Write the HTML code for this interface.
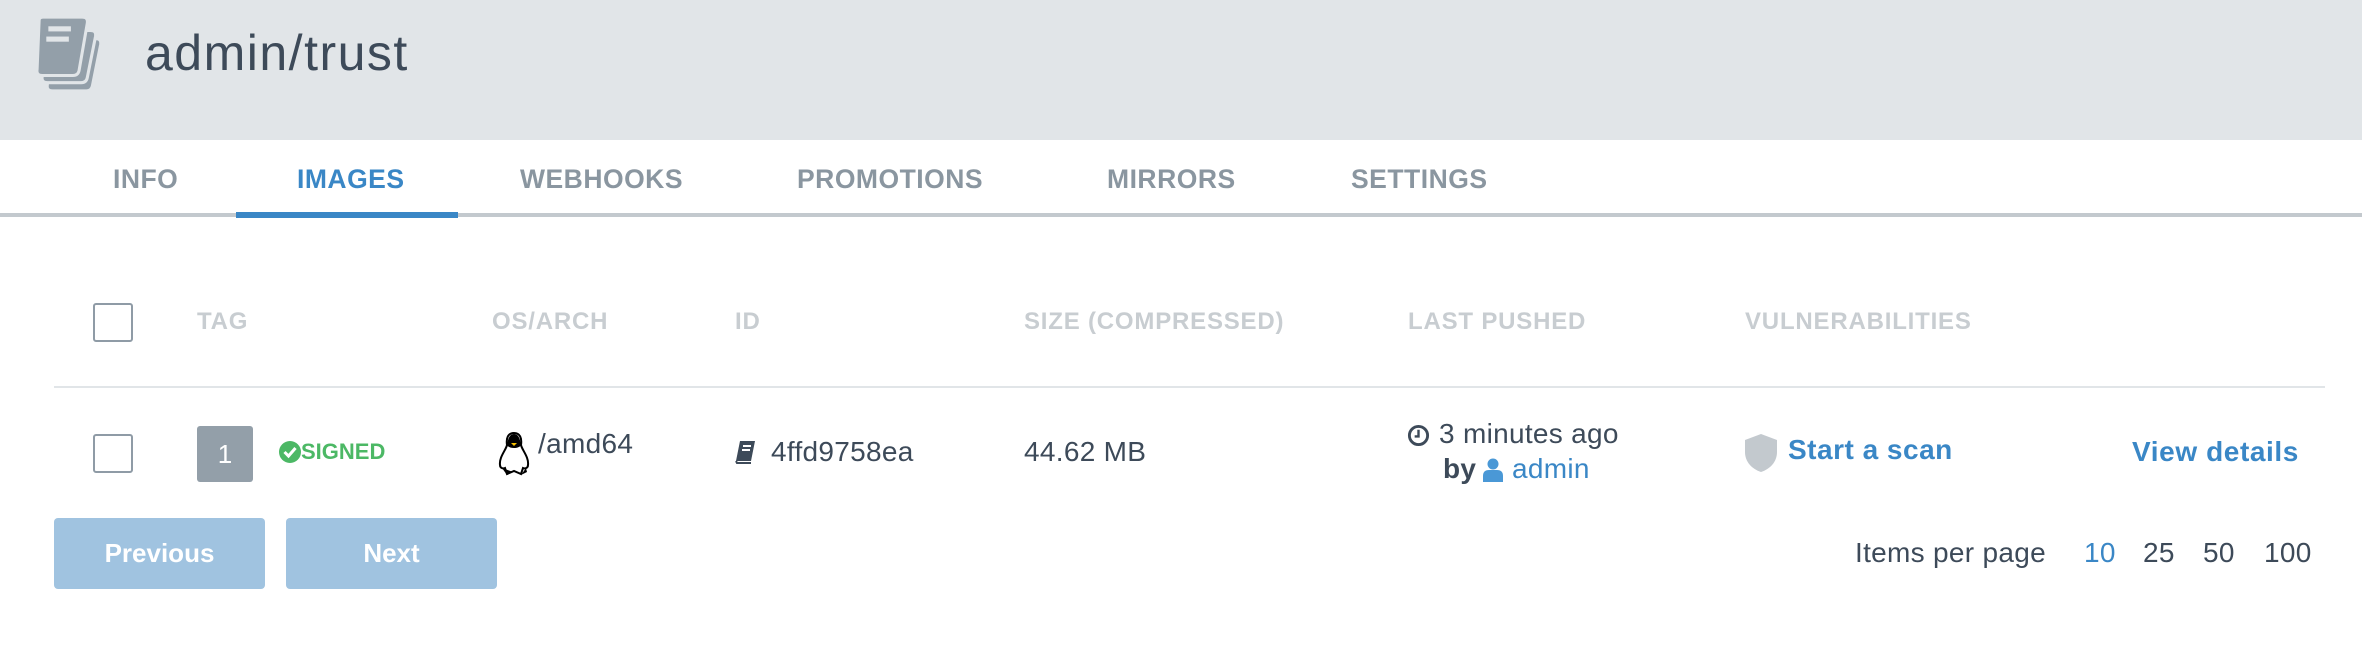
<!DOCTYPE html>
<html><head><meta charset="utf-8"><style>
*{margin:0;padding:0;box-sizing:border-box}
body{width:2362px;height:664px;background:#fff;font-family:"Liberation Sans",sans-serif;position:relative;overflow:hidden;color:#3d4a59}
.a{position:absolute;white-space:nowrap}
.hdr{position:absolute;left:0;top:0;width:2362px;height:140px;background:#e1e5e8}
.tabline{position:absolute;left:0;top:213px;width:2362px;height:4px;background:#c3c9ce}
.tab{position:absolute;top:164px;font-size:26.5px;font-weight:bold;color:#8a96a0;letter-spacing:0.5px}
.th{position:absolute;top:308px;font-size:24px;font-weight:bold;color:#c8cdd1;letter-spacing:0.8px}
.cb{position:absolute;width:40px;height:39px;border:2px solid #8f9ba6;border-radius:3px;background:#fff}
.td{position:absolute;font-size:28px;color:#3d4a59;white-space:nowrap;letter-spacing:0.3px}
.blue{color:#3a87c6}
.btn{position:absolute;top:518px;width:211px;height:71px;background:#a0c3e0;border-radius:4px;color:#fff;font-weight:bold;font-size:26px;text-align:center;line-height:71px}
</style></head><body>
<div class="hdr"></div>
<svg class="a" style="left:34px;top:16px" width="82" height="78" viewBox="0 0 80 76">
<g fill="#939fa9" stroke="#e1e5e8" stroke-width="3">
<path d="M14 22 h46 q6 0 5 6 l-8 40 q-1 5 -6 5 h-33 q-6 0 -5 -6 z"/>
<path d="M9 14 h46 q6 0 5 6 l-8 40 q-1 5 -6 5 h-33 q-6 0 -5 -6 z"/>
<path d="M5 4 q0 -3 4 -3 h38 q6 0 5 6 l-8 46 q-1 5 -6 5 h-30 q-6 0 -5 -6 z"/>
</g>
<rect x="14" y="10" width="22" height="5" fill="#e1e5e8"/><rect x="12" y="20" width="22" height="5" fill="#e1e5e8"/>
</svg>
<div class="a" style="left:145px;top:24px;font-size:50px;letter-spacing:1.5px;color:#3d4a59">admin/trust</div>
<div class="tabline"></div>
<div class="a" style="left:236px;top:212px;width:222px;height:6px;background:#3a87c6"></div>
<div class="tab" style="left:113px">INFO</div>
<div class="tab" style="left:297px;color:#3a87c6">IMAGES</div>
<div class="tab" style="left:520px">WEBHOOKS</div>
<div class="tab" style="left:797px">PROMOTIONS</div>
<div class="tab" style="left:1107px">MIRRORS</div>
<div class="tab" style="left:1351px">SETTINGS</div>

<div class="cb" style="left:93px;top:303px"></div>
<div class="th" style="left:197px">TAG</div>
<div class="th" style="left:492px">OS/ARCH</div>
<div class="th" style="left:735px">ID</div>
<div class="th" style="left:1024px">SIZE (COMPRESSED)</div>
<div class="th" style="left:1408px">LAST PUSHED</div>
<div class="th" style="left:1745px">VULNERABILITIES</div>
<div class="a" style="left:54px;top:386px;width:2271px;height:2px;background:#e1e5e8"></div>

<div class="cb" style="left:93px;top:434px"></div>
<div class="a" style="left:197px;top:426px;width:56px;height:56px;background:#939fa9;border-radius:3px;color:#fff;font-size:26px;text-align:center;line-height:56px">1</div>
<svg class="a" style="left:279px;top:441px" width="22" height="22" viewBox="0 0 22 22"><circle cx="11" cy="11" r="11" fill="#4cb865"/><path d="M5.5 11 l4 4 l7 -8" stroke="#fff" stroke-width="3" fill="none"/></svg>
<div class="a" style="left:301px;top:439px;font-size:22px;font-weight:bold;color:#4cb865">SIGNED</div>
<svg class="a" style="left:497px;top:432px" width="34" height="44" viewBox="0 0 34 44"><path d="M17 1 c-6 0 -8 5 -7 12 c-1 5 -8 12 -7 20 c0 3 3 4 5 3 l2 6 l7 -3 l7 3 l2 -6 c2 1 5 0 5 -3 c1 -8 -6 -15 -7 -20 c1 -7 -1 -12 -7 -12z" fill="#fff" stroke="#000" stroke-width="2"/><path d="M10 13 c2 4 12 4 14 0 c-1 -7 -3 -11 -7 -11 c-4 0 -6 4 -7 11z" fill="#000"/><path d="M5 36 l5 7 l6 -3z M29 36 l-5 7 l6 -3z" fill="#000"/><path d="M14 11 h6 l-3 3z" fill="#f5c000"/></svg>
<div class="td" style="left:538px;top:428px">/amd64</div>
<svg class="a" style="left:735px;top:440px" width="22" height="24" viewBox="0 0 22 24"><path d="M5 1 h15 l-4 20 h-15 z" fill="#3d4a59"/><path d="M1 21 l1 2 h14" stroke="#3d4a59" stroke-width="2" fill="none"/><rect x="8" y="5" width="8" height="2" fill="#fff"/><rect x="7" y="9" width="8" height="2" fill="#fff"/></svg>
<div class="td" style="left:771px;top:436px">4ffd9758ea</div>
<div class="td" style="left:1024px;top:436px">44.62 MB</div>
<svg class="a" style="left:1407px;top:424px" width="23" height="23" viewBox="0 0 24 24"><circle cx="12" cy="12" r="9.5" fill="none" stroke="#3d4a59" stroke-width="3"/><path d="M12 6 v7 h-4" stroke="#3d4a59" stroke-width="2.5" fill="none"/></svg>
<div class="td" style="left:1439px;top:418px">3 minutes ago</div>
<div class="td" style="left:1443px;top:453px;font-weight:bold">by</div>
<svg class="a" style="left:1483px;top:458px" width="20" height="24" viewBox="0 0 20 24"><circle cx="10" cy="6" r="5.5" fill="#4a98d6"/><path d="M0 24 v-6 q0 -6 6 -6 h8 q6 0 6 6 v6z" fill="#4a98d6"/></svg>
<div class="td blue" style="left:1512px;top:453px">admin</div>
<svg class="a" style="left:1745px;top:434px" width="32" height="38" viewBox="0 0 32 38"><path d="M16 0 l16 6 v12 c0 10 -7 17 -16 20 c-9 -3 -16 -10 -16 -20 v-12z" fill="#c3c9ce"/></svg>
<div class="td blue" style="left:1788px;top:434px;font-weight:bold;letter-spacing:0.5px">Start a scan</div>
<div class="td blue" style="left:2132px;top:436px;font-weight:bold;letter-spacing:0.6px">View details</div>

<div class="btn" style="left:54px">Previous</div>
<div class="btn" style="left:286px">Next</div>
<div class="td" style="left:1855px;top:537px">Items per page</div>
<div class="td blue" style="left:2084px;top:537px">10</div>
<div class="td" style="left:2143px;top:537px">25</div>
<div class="td" style="left:2203px;top:537px">50</div>
<div class="td" style="left:2264px;top:537px">100</div>
</body></html>
